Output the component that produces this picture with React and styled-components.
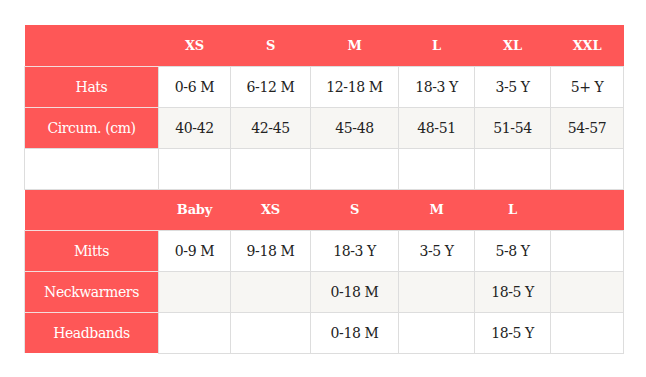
import React from "react";
import styled, { createGlobalStyle } from "styled-components";

const Global = createGlobalStyle`
  html, body { margin: 0; padding: 0; background: #fff; }
  body { padding: 25px 0 0 24px; font-family: "DejaVu Serif", "Liberation Serif", serif; }
`;

const RED = "#fe5757";

const Table = styled.table`
  border-collapse: collapse;
  table-layout: fixed;
  width: 599px;
  font-size: 14px;
  letter-spacing: -0.4px;
  color: #222;
`;

const HeadRow = styled.tr`
  height: 41px;
  background: ${RED};
`;

const HeadCell = styled.th`
  color: #fff;
  font-weight: bold;
  font-size: 13px;
  letter-spacing: -0.2px;
  text-align: center;
  padding: 0;
  border: none;
`;

const Row = styled.tr`
  height: 41px;
  background: ${(p) => (p.$alt ? "#f7f6f3" : "#fff")};
`;

const Label = styled.th`
  background: ${RED};
  color: #fff;
  font-weight: normal;
  text-align: center;
  padding: 0;
  border-top: 1px solid #f4dcdc;
  border-left: 1px solid #e4e4e4;
`;

const Cell = styled.td`
  text-align: center;
  padding: 0;
  border: 1px solid #dddddd;
`;

const widths = [134, 72, 80, 88, 76, 76, 73];

const sections = [
  {
    head: ["XS", "S", "M", "L", "XL", "XXL"],
    rows: [
      ["Hats", "0-6 M", "6-12 M", "12-18 M", "18-3 Y", "3-5 Y", "5+ Y"],
      ["Circum. (cm)", "40-42", "42-45", "45-48", "48-51", "51-54", "54-57"],
      [null, "", "", "", "", "", ""],
    ],
  },
  {
    head: ["Baby", "XS", "S", "M", "L", ""],
    rows: [
      ["Mitts", "0-9 M", "9-18 M", "18-3 Y", "3-5 Y", "5-8 Y", ""],
      ["Neckwarmers", "", "", "0-18 M", "", "18-5 Y", ""],
      ["Headbands", "", "", "0-18 M", "", "18-5 Y", ""],
    ],
  },
];

export default function App() {
  return (
    <>
      <Global />
      <Table>
        <colgroup>
          {widths.map((w, i) => (
            <col key={i} style={{ width: w }} />
          ))}
        </colgroup>
        {sections.map((s, si) => (
          <tbody key={si}>
            <HeadRow>
              <HeadCell />
              {s.head.map((h, i) => (
                <HeadCell key={i}>{h}</HeadCell>
              ))}
            </HeadRow>
            {s.rows.map((r, ri) => (
              <Row key={ri} $alt={ri === 1}>
                {r[0] === null ? <Cell /> : <Label>{r[0]}</Label>}
                {r.slice(1).map((c, ci) => (
                  <Cell key={ci}>{c}</Cell>
                ))}
              </Row>
            ))}
          </tbody>
        ))}
      </Table>
    </>
  );
}
